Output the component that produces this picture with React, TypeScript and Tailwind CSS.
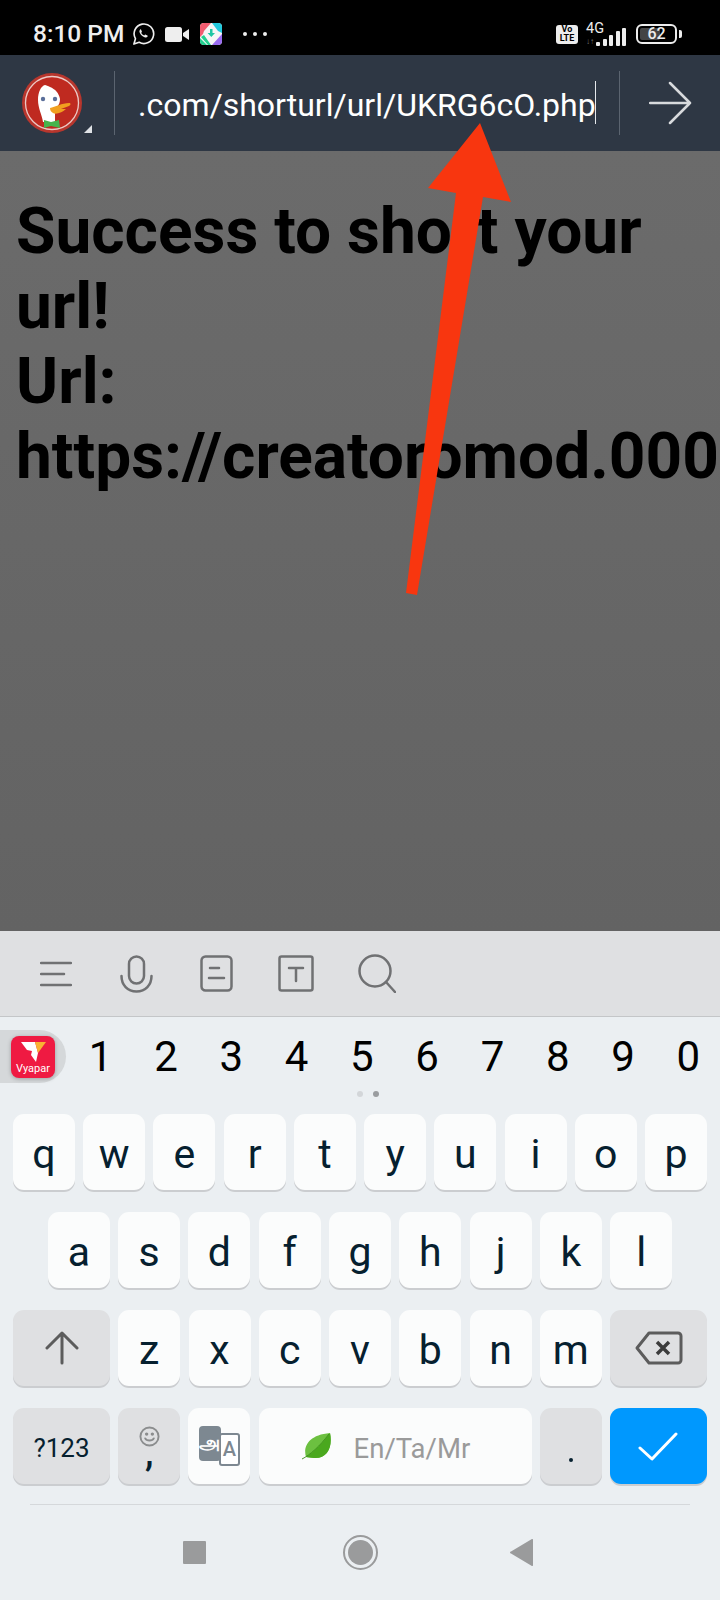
const font = "font-['Roboto',sans-serif]";

function Key({ w, bg = "bg-[#fbfcfc]", children, cls = "" }: { w: string; bg?: string; children: React.ReactNode; cls?: string }) {
  return (
    <div className={`${w} ${bg} ${cls} h-[76px] mb-px rounded-[11px] shadow-[0_2px_0_#cbcdd0] flex items-center justify-center text-[#06202f] text-[41px] leading-none`}>
      {children}
    </div>
  );
}

function Letters({ s }: { s: string }) {
  return (
    <>
      {s.split("").map((c) => (
        <Key key={c} w="w-[62px]"><span className="mt-[4px]">{c}</span></Key>
      ))}
    </>
  );
}

function Duck() {
  return (
    <svg width="60" height="60" viewBox="0 0 60 60">
      <circle cx="30" cy="30" r="30" fill="#b8362d" />
      <circle cx="30" cy="30" r="26.500" fill="#bf2a20" stroke="#eccac6" strokeWidth="1.300" />
      <path d="M16 27c0-8 3-14 7-15 1 0 3 1 5 2 5 2 9 6 10 12 0 3-1 6-3 8l-2 2c0 4 0 9 0 13H21c-1-7-5-14-5-22z" fill="#fff" />
      <circle cx="21" cy="26" r="2.200" fill="#5b6f9a" />
      <circle cx="33" cy="26" r="2.200" fill="#5b6f9a" />
      <path d="M28 35c5-1 12-5 19-5 2 0 2 2 0 3l-8 3 5 0c-3 3-10 6-13 4-2-1-3-3-3-5z" fill="#f1a01f" />
      <path d="M22 47l7 2 8-2 1 8-9-2-7 2z" fill="#47b44c" />
    </svg>
  );
}

function WhatsApp() {
  return (
    <svg width="23" height="24" viewBox="0 0 24 24" fill="none" stroke="#eeeeee" strokeWidth="1.700">
      <path d="M2 22.500l1.600-5.600a10.200 10.200 0 1 1 3.900 3.800z" strokeLinejoin="round" />
      <path d="M8.600 7.300c-.9.800-1.100 2-.5 3.400 1 2.300 2.800 4 5 4.800 1.400.5 2.600.1 3.200-1 .2-.5.1-.8-.3-1l-1.700-.8c-.4-.2-.6-.1-.9.2l-.6.700c-1.400-.5-2.500-1.500-3.200-2.900l.5-.6c.3-.3.3-.5.1-.9l-.7-1.700c-.2-.5-.5-.5-.9-.2z" fill="#eeeeee" stroke="none" />
    </svg>
  );
}

function Kite() {
  return (
    <svg width="22" height="22" viewBox="0 0 22 22">
      <defs><clipPath id="kc"><rect width="22" height="22" rx="4" /></clipPath></defs>
      <g clipPath="url(#kc)">
        <rect width="22" height="22" fill="#f6f6f6" />
        <path d="M0 0h11L4 8 3 11 0 14z" fill="#f25c70" />
        <path d="M12 0h10v10L18 8z" fill="#22c9dd" />
        <path d="M22 11v11H12z" fill="#9a6cf0" />
        <path d="M0 15l7 7H0zM1 14l3-2 7 10H8z" fill="#22d08f" />
        <path d="M10 6h2.500v4H15l-3.700 4-3.700-4H10z" fill="#1fc6a4" />
      </g>
    </svg>
  );
}

function Signal() {
  const bars = [4, 7, 11, 15, 18];
  return (
    <div className="flex items-end gap-[2.500px]">
      {bars.map((h, i) => (
        <svg key={i} width="4" height={h} viewBox={`0 0 4 ${h}`}>
          <rect width="4" height={h} rx="1" fill="#ededed" />
        </svg>
      ))}
    </div>
  );
}

export default function App() {
  return (
    <div className={`relative w-[720px] h-[1600px] overflow-hidden bg-[#ebeff2] flex flex-col ${font}`}>
      {/* status bar */}
      <div className="h-[55px] bg-black text-[#eeeeee] flex items-center pt-[13px] pl-[33px] pr-[38px] shrink-0">
        <span className="text-[24.500px] font-medium leading-none">8:10 PM</span>
        <span className="ml-[8px] -mt-[1px]"><WhatsApp /></span>
        <svg className="ml-[10px]" width="24" height="15" viewBox="0 0 24 15">
          <rect x="0" y="0" width="17" height="15" rx="2.500" fill="#eeeeee" />
          <path d="M18 6l6-4v11l-6-4z" fill="#eeeeee" />
        </svg>
        <span className="ml-[11px]"><Kite /></span>
        <div className="ml-[21px] flex gap-[6px]">
          <i className="block w-[4px] h-[4px] rounded-full bg-[#eeeeee]" />
          <i className="block w-[4px] h-[4px] rounded-full bg-[#eeeeee]" />
          <i className="block w-[4px] h-[4px] rounded-full bg-[#eeeeee]" />
        </div>
        <div className="ml-auto flex items-center">
          <div className="w-[22px] h-[19px] rounded-[3px] bg-[#ededed] text-black text-[9px] font-bold leading-[9px] text-center flex flex-col justify-center">
            <span>Vo</span><span>LTE</span>
          </div>
          <div className="relative ml-[8px] w-[40px] h-[23px]">
            <span className="absolute left-0 top-0 text-[14.500px] leading-[12px] text-[#ededed] whitespace-nowrap">4G</span>
            <span className="absolute left-0 bottom-0 text-[8px] leading-[8px] text-[#777] whitespace-nowrap">↓↑</span>
            <div className="absolute right-0 bottom-0"><Signal /></div>
          </div>
          <div className="relative ml-[10px] w-[41px] h-[20px] rounded-[6px] border-2 border-[#ededed] flex items-center p-[2px]">
            <div className="h-full w-[60%] rounded-[2px] bg-[#444]" />
            <span className="absolute inset-0 flex items-center justify-center text-[16px] font-medium text-[#ededed] leading-none">62</span>
          </div>
          <div className="ml-[2px] w-[3px] h-[8px] rounded-r-[2px] bg-[#ededed]" />
        </div>
      </div>

      {/* browser bar */}
      <div className="h-[96px] bg-[#2e3744] flex items-center shrink-0">
        <div className="relative ml-[22px] w-[60px] h-[60px] shrink-0">
          <Duck />
          <div className="absolute left-[62px] top-[52px] w-0 h-0 border-l-[8px] border-l-transparent border-b-[8px] border-b-[#dfe2e6]" />
        </div>
        <div className="ml-[32px] w-px h-[64px] bg-[#5b6470] shrink-0" />
        <div className="relative ml-[23px] w-[481px] shrink-0 text-[32px] leading-none mt-[4px] text-white whitespace-nowrap">
          .com/shorturl/url/UKRG6cO.php
          <span className="absolute left-[457px] top-[-8px] w-px h-[43px] bg-[#e5e8ec]" />
        </div>
        <div className="w-px h-[64px] bg-[#5b6470] shrink-0" />
        <svg className="ml-[29px]" width="43" height="44" viewBox="0 0 43 44" fill="none" stroke="#d8dadd" strokeWidth="2.500" strokeLinecap="round" strokeLinejoin="round">
          <path d="M1 22h40M21 2l20 20-20 20" />
        </svg>
      </div>

      {/* page */}
      <div className="h-[780px] shrink-0 bg-gradient-to-b from-[#6b6b6b] to-[#636363] overflow-hidden pl-[16px] pt-[43px]">
        <div className="text-[64px] leading-[75px] font-bold text-black w-[720px] whitespace-nowrap">
          <div>Success to short your</div>
          <div>url!</div>
          <div>Url:</div>
          <div>https://creatoromod.000</div>
        </div>
      </div>

      {/* toolbar */}
      <div className="h-[86px] shrink-0 bg-[#dfe0e2] border-b border-[#c4c6c8] flex items-center pl-[40px] text-[#707173]">
        <svg width="32" height="26" viewBox="0 0 32 26" fill="none" stroke="currentColor" strokeWidth="2.500" strokeLinecap="round">
          <path d="M1 2h30M1 13h23M1 24h30" />
        </svg>
        <svg className="ml-[48px]" width="33" height="38" viewBox="0 0 33 38" fill="none" stroke="currentColor" strokeWidth="2.500" strokeLinecap="round">
          <rect x="9" y="1.500" width="15" height="27" rx="7.500" />
          <path d="M1.500 21c0 9 6 15.500 15 15.500s15-6.500 15-15.500" />
        </svg>
        <svg className="ml-[47px]" width="33" height="37" viewBox="0 0 33 37" fill="none" stroke="currentColor" strokeWidth="2.500" strokeLinecap="round">
          <rect x="1.500" y="1.500" width="30" height="34" rx="4" />
          <path d="M10 13h9M9 23h15" />
        </svg>
        <svg className="ml-[45px]" width="36" height="37" viewBox="0 0 36 37" fill="none" stroke="currentColor" strokeWidth="2.500" strokeLinecap="round">
          <rect x="1.500" y="1.500" width="33" height="34" rx="2" />
          <path d="M11 13h14M18 13v13" />
        </svg>
        <svg className="ml-[44px]" width="38" height="39" viewBox="0 0 38 39" fill="none" stroke="currentColor" strokeWidth="2.500" strokeLinecap="round">
          <circle cx="17" cy="17" r="15.500" />
          <path d="M28 28l9 10" />
        </svg>
      </div>

      {/* digits */}
      <div className="relative h-[97px] shrink-0 flex items-start">
        <div className="mt-[13px] w-[66px] h-[53px] rounded-r-[27px] bg-[#d5d8da] flex items-center pl-[11px] shrink-0">
          <div className="w-[44px] h-[42px] rounded-[8px] bg-[#ef1a42] flex flex-col items-center shadow-[0_1px_4px_#0004]">
            <svg width="44" height="27" viewBox="0 0 44 27">
              <path d="M10 6h14l3 11-2 9-5-7 1-4-5-1z" fill="#fff" />
              <path d="M24 6h11l-8 11z" fill="#f9b233" />
            </svg>
            <span className="text-[11px] leading-[11px] text-white">Vyapar</span>
          </div>
        </div>
        <div className="flex mt-[10px] ml-[2px] text-[42px] leading-[60px] text-black">
          {"1234567890".split("").map((d) => (
            <span key={d} className="w-[65.300px] text-center">{d}</span>
          ))}
        </div>
        <div className="absolute left-[357px] top-[74px] flex gap-[10px]">
          <i className="block w-[6px] h-[6px] rounded-full bg-[#d3d6d9]" />
          <i className="block w-[6px] h-[6px] rounded-full bg-[#9a9da0]" />
        </div>
      </div>

      {/* keys */}
      <div className="flex flex-col gap-[21px] px-[13px] shrink-0">
        <div className="flex justify-between"><Letters s="qwertyuiop" /></div>
        <div className="flex justify-center gap-[8.300px]"><Letters s="asdfghjkl" /></div>
        <div className="flex justify-between">
          <Key w="w-[97px]" bg="bg-[#dfe0e2]">
            <svg width="34" height="34" viewBox="0 0 34 34" fill="none" stroke="#5c5c5c" strokeWidth="3" strokeLinecap="round" strokeLinejoin="round">
              <path d="M17 32V3M2 17L17 2l15 15" />
            </svg>
          </Key>
          <Letters s="zxcvbnm" />
          <Key w="w-[97px]" bg="bg-[#dfe0e2]">
            <svg width="48" height="34" viewBox="0 0 48 34" fill="none" stroke="#5c5c5c" strokeWidth="3" strokeLinejoin="round">
              <path d="M14 2h29a3 3 0 0 1 3 3v24a3 3 0 0 1-3 3H14L2 17z" />
              <path d="M22 11l12 12M34 11L22 23" strokeWidth="3.500" stroke="#3c3c3c" />
            </svg>
          </Key>
        </div>
        <div className="flex justify-between">
          <Key w="w-[97px]" bg="bg-[#dfe0e2]" cls="!text-[26px]"><span className="mt-[3px]">?123</span></Key>
          <Key w="w-[62px]" bg="bg-[#dfe0e2]">
            <div className="flex flex-col items-center">
              <svg width="21" height="21" viewBox="0 0 22 22" fill="none" stroke="#8b8d8e" strokeWidth="2" strokeLinecap="round">
                <circle cx="11" cy="11" r="9.500" />
                <path d="M6.500 13c1.500 3 7.500 3 9 0" />
                <circle cx="8" cy="8.500" r="0.800" fill="#8b8d8e" />
                <circle cx="14" cy="8.500" r="0.800" fill="#8b8d8e" />
              </svg>
              <span className="text-[38px] font-medium leading-[10px] h-[20px]">,</span>
            </div>
          </Key>
          <Key w="w-[62px]">
            <div className="relative w-[41px] h-[41px]">
              <div className="absolute left-[20px] top-[7px] w-[21px] h-[33px] rounded-[3px] border-[2.500px] border-[#7d8891] bg-white text-[#7d8891] text-[20px] font-medium leading-[28px] text-center">A</div>
              <div className="absolute left-0 top-0 w-[22px] h-[35px] rounded-[4px] bg-[#7d8891] text-white text-[19px] font-bold leading-[32px] text-center font-['Noto_Sans',sans-serif]">அ</div>
            </div>
          </Key>
          <Key w="w-[273px]" cls="!justify-start">
            <svg className="ml-[43px]" width="30" height="28" viewBox="0 0 30 28">
              <path d="M4 25C1 15 6 3 28 1c3 14-3 26-16 25-3 0-6-1-8-1z" fill="#6cc040" />
              <path d="M4 25C12 20 20 12 28 1c3 14-3 26-16 25-3 0-6-1-8-1z" fill="#4aa81e" />
              <path d="M0 27C8 23 18 14 27 2" stroke="#3b8c1a" strokeWidth="0.900" fill="none" />
            </svg>
            <span className="ml-[22px] mt-[5px] text-[27.500px] text-[#9a9a9a]">En/Ta/Mr</span>
          </Key>
          <Key w="w-[62px]" bg="bg-[#dfe0e2]">
            <span className="block w-[4.500px] h-[4.500px] rounded-full bg-[#06202f] mt-[28px]" />
          </Key>
          <Key w="w-[97px]" bg="bg-[#0098fe]">
            <svg width="40" height="29" viewBox="0 0 40 29" fill="none" stroke="#fff" strokeWidth="3" strokeLinecap="round" strokeLinejoin="round">
              <path d="M2 16l12 11L38 2" />
            </svg>
          </Key>
        </div>
      </div>

      <div className="mx-[30px] mt-[19px] h-px bg-[#d5d8db] shrink-0" />

      {/* nav */}
      <div className="flex items-center mt-[30px]">
        <div className="ml-[183px] w-[23px] h-[23px] rounded-[1px] bg-[#9a9b9c]" />
        <div className="ml-[137px] w-[35px] h-[35px] rounded-full border-[2.500px] border-[#9a9b9c] flex items-center justify-center">
          <div className="w-[25px] h-[25px] rounded-full bg-[#9a9b9c]" />
        </div>
        <svg className="ml-[132px]" width="23" height="27" viewBox="0 0 23 27">
          <path d="M23 1v25a1 1 0 0 1-1.500.8L1 14.500a1 1 0 0 1 0-2L21.500.2A1 1 0 0 1 23 1z" fill="#9a9b9c" />
        </svg>
      </div>

      {/* annotation arrow */}
      <svg className="absolute left-0 top-0 pointer-events-none" width="720" height="600" viewBox="0 0 720 600">
        <path d="M480 123L511 202 483 197 417 595 406 593 456 193 428 188z" fill="#f8360f" />
      </svg>
    </div>
  );
}
